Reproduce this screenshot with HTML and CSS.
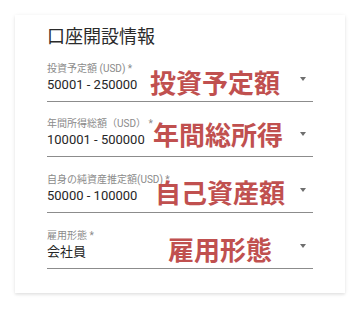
FILE: index.html
```html
<!DOCTYPE html>
<html lang="ja">
<head>
<meta charset="utf-8">
<link rel="stylesheet" href="styles.css">
</head>
<body>
<div class="card">
  <h2 class="title">口座開設情報</h2>
  <div class="field">
    <div class="label">投資予定額 (USD) *</div>
    <div class="value">50001 - 250000</div>
    <span class="arrow"></span>
    <span class="note n1">投資予定額</span>
  </div>
  <div class="field">
    <div class="label">年間所得総額（USD） *</div>
    <div class="value">100001 - 500000</div>
    <span class="arrow"></span>
    <span class="note n2">年間総所得</span>
  </div>
  <div class="field">
    <div class="label">自身の純資産推定額(USD) *</div>
    <div class="value">50000 - 100000</div>
    <span class="arrow"></span>
    <span class="note n3">自己資産額</span>
  </div>
  <div class="field">
    <div class="label">雇用形態 *</div>
    <div class="value">会社員</div>
    <span class="arrow"></span>
    <span class="note n4">雇用形態</span>
  </div>
</div>
</body>
</html>
```

FILE: styles.css
```css
html, body {
  margin: 0;
  padding: 0;
  background: #ffffff;
}
body {
  width: 360px;
  height: 309px;
  overflow: hidden;
  font-family: Roboto, "Noto Sans CJK JP", sans-serif;
}
.card {
  margin: 15px 0 0 15px;
  width: 330px;
  height: 278px;
  box-sizing: border-box;
  padding: 8px 0 0 32px;
  background: #fff;
  box-shadow: 0 1px 4px rgba(0,0,0,0.10), 0 2px 2px rgba(0,0,0,0.04);
}
.title {
  margin: 0 0 16px 0;
  font-size: 18px;
  line-height: 24px;
  font-weight: 400;
  color: #2b2b2b;
  font-family: "Noto Sans CJK JP", sans-serif;
}
.field {
  position: relative;
  width: 266px;
  padding-bottom: 6px;
  border-bottom: 1px solid #8c8c8c;
  margin-bottom: 16px;
}
.field:nth-child(3), .field:nth-child(4) { margin-bottom: 17px; }
.label {
  font-size: 10px;
  line-height: 12px;
  color: #8a8a8a;
  font-family: Roboto, "Noto Sans CJK JP", sans-serif;
}
.value {
  font-size: 13px;
  line-height: 20px;
  color: #262626;
  font-family: Roboto, "Noto Sans CJK JP", sans-serif;
}
.arrow {
  position: absolute;
  right: 7px;
  top: 14px;
  width: 0;
  height: 0;
  border-left: 3.5px solid transparent;
  border-right: 3.5px solid transparent;
  border-top: 4px solid #6e6e6e;
}
.note {
  position: absolute;
  font-family: "Noto Sans CJK JP", sans-serif;
  font-weight: 700;
  font-size: 26px;
  line-height: 26px;
  color: #c0504f;
  white-space: nowrap;
}
.n1 { left: 103px; top: 6px; }
.n2 { left: 106px; top: 3px; }
.n3 { left: 108px; top: 5px; }
.n4 { left: 121px; top: 6px; }
```
